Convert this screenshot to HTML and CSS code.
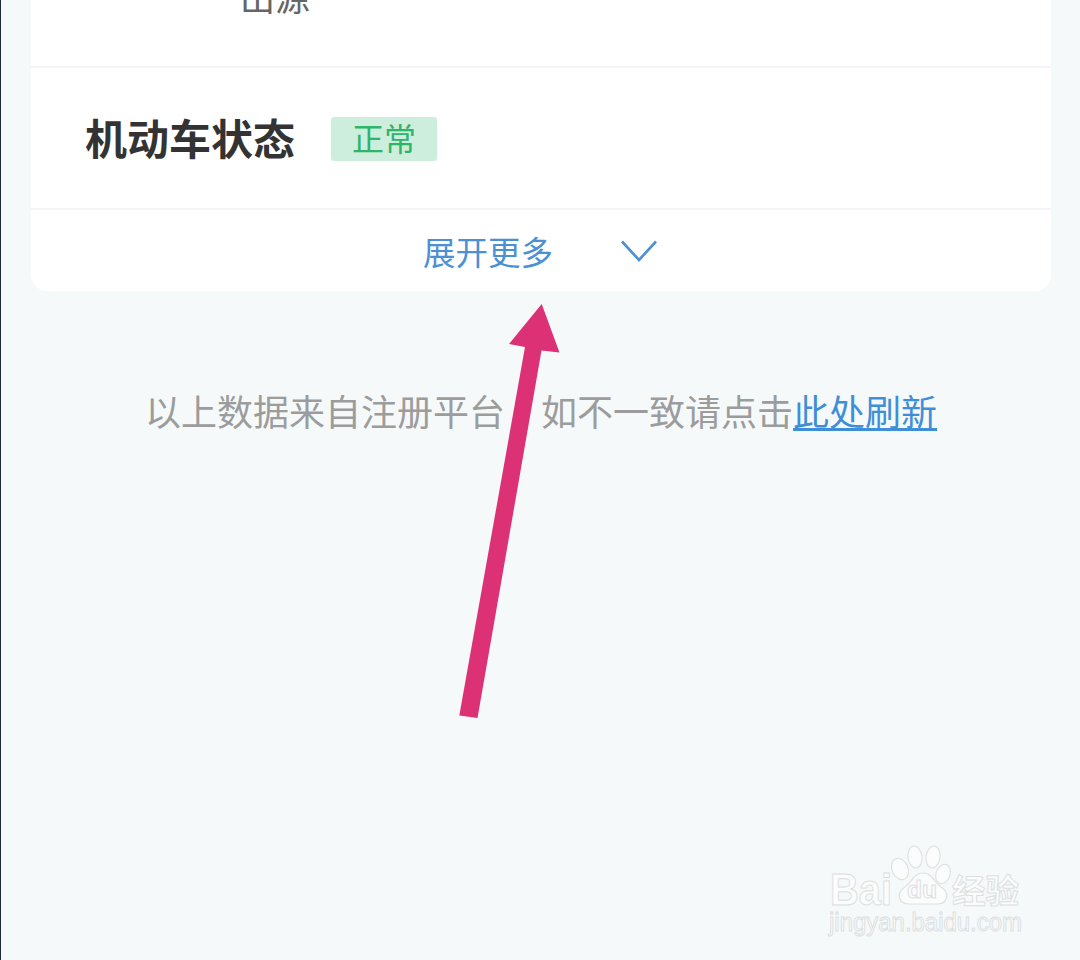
FILE: index.html
```html
<!DOCTYPE html>
<html lang="zh-CN">
<head>
    <meta charset="UTF-8">
    <title>机动车状态</title>
    <link rel="stylesheet" href="styles.css">
</head>
<body>
<div class="page">
    <!--信息卡片-->
    <div class="card">
        <div class="row-source">
            <span class="source-text">出源</span>
        </div>
        <div class="row-status">
            <span class="status-label">机动车状态</span>
            <span class="status-tag">正常</span>
        </div>
        <div class="row-more">
            <span class="more-text">展开更多</span>
            <svg class="more-icon" width="38" height="24" viewBox="0 0 38 24">
                <path d="M2 2.5 L19 21 L36 2.5" fill="none" stroke="#4a90d2" stroke-width="2.6"/>
            </svg>
        </div>
    </div>

    <!--底部提示-->
    <p class="notice">以上数据来自注册平台<span class="notice-comma" lang="zh-TW">，</span>如不一致请点击<a class="notice-link" href="#">此处刷新</a></p>

    <!--箭头标注-->
    <svg class="arrow" width="1080" height="960" viewBox="0 0 1080 960">
        <path d="M541.7 304 L559.5 352.5 L541.5 350.5 L477.5 718 L459.3 715.5 L525 347 L509 344 Z" fill="#dd3176"/>
    </svg>

    <!--水印-->
    <svg class="mark" width="240" height="110" viewBox="0 0 240 110">
        <g fill="#fbfcfc" stroke="#dfe2e4" stroke-width="1.2">
            <ellipse cx="100" cy="31" rx="8" ry="11" transform="rotate(-25 100 31)"/>
            <ellipse cx="115" cy="19" rx="7" ry="11" transform="rotate(-8 115 19)"/>
            <ellipse cx="133" cy="19" rx="7" ry="11" transform="rotate(8 133 19)"/>
            <ellipse cx="143" cy="36" rx="7" ry="10" transform="rotate(20 143 36)"/>
            <path d="M123 35 C132 35 134 44 141 49 C150 55 148 66 137 66 L109 66 C98 66 96 55 105 49 C112 44 114 35 123 35 Z"/>
        </g>
        <text class="mark-du" x="107" y="60" textLength="30" lengthAdjust="spacingAndGlyphs">du</text>
        <text class="mark-bai" x="30" y="67" textLength="62" lengthAdjust="spacingAndGlyphs">Bai</text>
        <text class="mark-cn" x="152" y="65" textLength="67" lengthAdjust="spacingAndGlyphs">经验</text>
        <text class="mark-url" x="29" y="93" textLength="193" lengthAdjust="spacingAndGlyphs">jingyan.baidu.com</text>
    </svg>
</div>
</body>
</html>
```

FILE: styles.css
```css
*{
    margin: 0;
    padding: 0;
    box-sizing: border-box;
}
body{
    width: 1080px;
    height: 960px;
    overflow: hidden;
    background-color: #f5f9fa;
    font-family: "Noto Sans CJK SC", "Liberation Sans", sans-serif;
}
.page{
    position: relative;
    height: 960px;
    padding-left: 30px;
    border-left: 1px solid #1d2c3c;
}

.card{
    width: 1020px;
    height: 291px;
    background-color: #fff;
    border-radius: 0 0 16px 16px;
}
.row-source{
    height: 68px;
    padding-left: 209px;
    border-bottom: 2px solid #f3f4f5;
    overflow: hidden;
}
.source-text{
    display: block;
    margin-top: -22px;
    font-size: 35px;
    line-height: 35px;
    color: #666;
}
.row-status{
    height: 142px;
    padding-left: 54px;
    padding-bottom: 3px;
    display: flex;
    align-items: center;
    border-bottom: 2px solid #f3f4f5;
}
.status-label{
    width: 246px;
    font-size: 42px;
    font-weight: bold;
    color: #333;
}
.status-tag{
    width: 106px;
    height: 44px;
    margin-top: 4px;
    line-height: 40px;
    text-align: center;
    font-size: 32px;
    color: #2db56a;
    background-color: #cdeedd;
    border-radius: 3px;
}
.row-more{
    height: 81px;
    padding-left: 392px;
    display: flex;
    align-items: center;
    gap: 67px;
}
.more-text{
    font-size: 32.5px;
    color: #4a90d2;
}

.notice{
    margin-top: 94px;
    padding-left: 114px;
    font-size: 36px;
    line-height: 50px;
    color: #9c9c9c;
    white-space: nowrap;
}
/*这个逗号被箭头挡住，用居中的字形*/
.notice-comma{
    font-family: "Noto Sans CJK TC", sans-serif;
}
.notice-link{
    color: #3f8fd8;
    text-decoration: underline;
}

.arrow{
    position: absolute;
    left: -1px;
    top: 0;
}
.mark{
    position: absolute;
    left: 799px;
    top: 838px;
}
.mark text{
    fill: #fbfcfc;
    stroke: #dcdfe1;
    stroke-width: 1;
}
.mark-bai{
    font-family: "Liberation Sans", sans-serif;
    font-size: 44px;
    font-weight: bold;
}
.mark-du{
    font-family: "Liberation Sans", sans-serif;
    font-size: 24px;
    font-weight: bold;
}
.mark-cn{
    font-family: "Noto Sans CJK SC", sans-serif;
    font-size: 33px;
    font-weight: bold;
}
.mark-url{
    font-family: "Liberation Sans", sans-serif;
    font-size: 26px;
}
```
